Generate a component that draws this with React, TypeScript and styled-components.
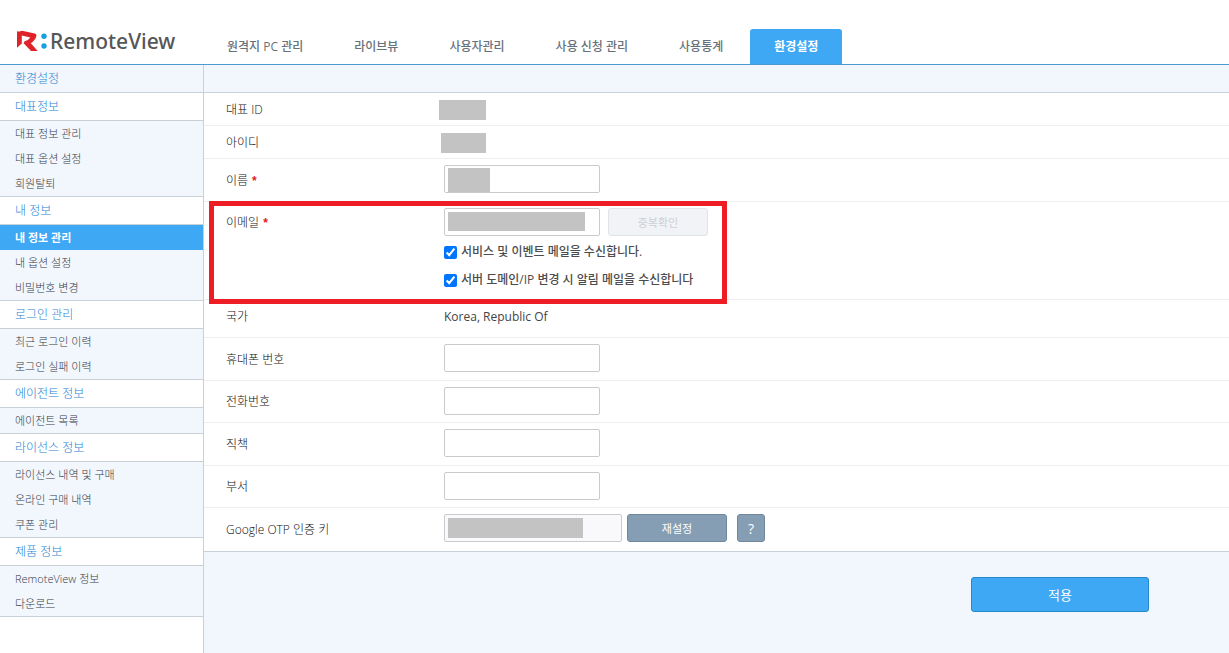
import React from "react";
import styled, { createGlobalStyle } from "styled-components";

const font = '"Open Sans", "Noto Sans CJK KR", sans-serif';
const line = "#c9d0d6";
const pale = "#f2f6fd";
const blue = "#3ea8f5";

const GlobalStyle = createGlobalStyle`
  *, *::before, *::after { box-sizing: border-box; }
  body { margin: 0; background: #fff; font-family: ${font}; font-size: 12px; color: #444; }
  button, input { font-family: inherit; font-size: inherit; }
`;

const Page = styled.div`
  min-height: 100vh;
  display: flex;
  flex-direction: column;
`;

const Header = styled.header`
  display: flex;
  align-items: flex-end;
  height: 65px;
  border-bottom: 1px solid #4b9bd1;
`;

const Brand = styled.a`
  display: flex;
  align-items: center;
  gap: 3px;
  width: 203px;
  height: 46px;
  padding-left: 16px;
  color: #555658;
  font-family: "Noto Sans", "Open Sans", sans-serif;
  font-size: 21px;
  font-weight: 500;
  text-decoration: none;
`;

const Nav = styled.nav`
  display: flex;
  gap: 3px;
`;

const Tab = styled.a<{ $active?: boolean }>`
  height: 35px;
  padding: 0 24px;
  line-height: 36px;
  border-radius: 3px 3px 0 0;
  white-space: nowrap;
  text-decoration: none;
  font-weight: ${(p) => (p.$active ? 700 : 500)};
  color: ${(p) => (p.$active ? "#fff" : "#67717b")};
  background: ${(p) => (p.$active ? blue : "transparent")};
`;

const Body = styled.div`
  flex: 1;
  display: flex;
`;

const Sidebar = styled.aside`
  flex: 0 0 204px;
  border-right: 1px solid ${line};
`;

const SideTitle = styled.h2<{ $shaded?: boolean }>`
  margin: 0;
  height: 28px;
  padding-left: 15px;
  line-height: 28px;
  border-bottom: 1px solid ${line};
  font-size: 12px;
  font-weight: 300;
  color: #1f83d2;
  background: ${(p) => (p.$shaded ? pale : "#fff")};
`;

const SideList = styled.ul`
  margin: 0;
  padding: 0;
  list-style: none;
  background: ${pale};
  border-bottom: 1px solid ${line};
`;

const SideLink = styled.a<{ $active?: boolean }>`
  display: block;
  height: 25px;
  padding-left: 15px;
  line-height: 26px;
  font-size: 11px;
  text-decoration: none;
  font-weight: ${(p) => (p.$active ? 700 : 300)};
  color: ${(p) => (p.$active ? "#fff" : "#333c46")};
  background: ${(p) => (p.$active ? blue : "transparent")};
`;

const Main = styled.main`
  flex: 1;
  min-width: 0;
  background: ${pale};
`;

const TitleBar = styled.div`
  height: 28px;
  border-bottom: 1px solid ${line};
`;

const FormTable = styled.table`
  width: 100%;
  border-collapse: separate;
  border-spacing: 0;
  background: #fff;
`;

const Row = styled.tr<{ $height: number }>`
  height: ${(p) => p.$height}px;
  & > * { border-bottom: 1px solid #eceef0; }
  &:last-child > * { border-bottom-color: ${line}; }
`;

const HeadCell = styled.th<{ $top?: boolean }>`
  position: relative;
  width: 240px;
  padding: ${(p) => (p.$top ? "12px 0 0 22px" : "1px 0 0 22px")};
  vertical-align: ${(p) => (p.$top ? "top" : "middle")};
  text-align: left;
  line-height: 18px;
  font-weight: 300;
  color: #111;
`;

const Cell = styled.td<{ $tall?: boolean }>`
  padding: ${(p) => (p.$tall ? "6px 0 0" : "0")};
  vertical-align: ${(p) => (p.$tall ? "top" : "middle")};
`;

const CountryText = styled.span`
  display: block;
  padding-bottom: 4px;
  line-height: 18px;
`;

const Required = styled.span`
  margin-left: 4px;
  color: #e01a22;
  font-family: "Liberation Sans", sans-serif;
  font-weight: 700;
`;

const Line = styled.div`
  display: flex;
  align-items: flex-start;
`;

const Field = styled.span`
  position: relative;
  display: block;
`;

const TextInput = styled.input<{ $wide?: boolean }>`
  display: block;
  width: ${(p) => (p.$wide ? 178 : 156)}px;
  height: 28px;
  padding: 0 6px;
  border: 1px solid #c8cacd;
  border-radius: 2px;
  background: ${(p) => (p.$wide ? "#f9f9fb" : "#fff")};
  color: #555;
`;

const Mask = styled.span<{ $x: number; $y: number; $w: number; $h: number }>`
  position: absolute;
  left: ${(p) => p.$x}px;
  top: ${(p) => p.$y}px;
  width: ${(p) => p.$w}px;
  height: ${(p) => p.$h}px;
  background: #c3c3c3;
`;

const MaskedValue = styled.span<{ $w: number; $pull: number }>`
  display: block;
  width: ${(p) => p.$w}px;
  height: 20px;
  margin: 2px 0 0 -${(p) => p.$pull}px;
  background: #c3c3c3;
`;

const Button = styled.button<{ $kind: "slate" | "primary" | "disabled"; $w: number }>`
  width: ${(p) => p.$w}px;
  height: ${(p) => (p.$kind === "primary" ? 35 : 28)}px;
  padding: 0;
  border-radius: 3px;
  border: 1px solid
    ${(p) => ({ slate: "#6f879c", primary: "#2489c9", disabled: "#e1e3e7" })[p.$kind]};
  background: ${(p) => ({ slate: "#869eb4", primary: blue, disabled: "#f2f3f6" })[p.$kind]};
  color: ${(p) => (p.$kind === "disabled" ? "#cdd0d5" : "#fff")};
  font-size: ${(p) => (p.$kind === "primary" ? 13 : 11)}px;
`;

const DuplicateButton = styled(Button)`
  margin-left: 8px;
`;

const ResetButton = styled(Button)`
  margin-left: 5px;
`;

const HelpButton = styled(Button)`
  margin-left: 10px;
  font-size: 14px;
`;

const CheckList = styled.div`
  padding-top: 1px;
`;

const CheckRow = styled.label`
  display: flex;
  align-items: center;
  gap: 4px;
  height: 28px;
  font-weight: 500;
  color: #4c4c4c;
`;

const Check = styled.input`
  width: 13px;
  height: 13px;
  margin: 3px 0 0;
  accent-color: #0075ff;
`;

const Highlight = styled.span`
  position: absolute;
  z-index: 1;
  left: 5px;
  top: -1px;
  width: 518px;
  height: 103px;
  border: 5px solid #ee1c24;
  pointer-events: none;
`;

const Footer = styled.div`
  display: flex;
  justify-content: flex-end;
  padding: 25px 80px;
`;

const groups: { title: string; items: string[] }[] = [
  { title: "대표정보", items: ["대표 정보 관리", "대표 옵션 설정", "회원탈퇴"] },
  { title: "내 정보", items: ["내 정보 관리", "내 옵션 설정", "비밀번호 변경"] },
  { title: "로그인 관리", items: ["최근 로그인 이력", "로그인 실패 이력"] },
  { title: "에이전트 정보", items: ["에이전트 목록"] },
  { title: "라이선스 정보", items: ["라이선스 내역 및 구매", "온라인 구매 내역", "쿠폰 관리"] },
  { title: "제품 정보", items: ["RemoteView 정보", "다운로드"] },
];

const tabs = ["원격지 PC 관리", "라이브뷰", "사용자관리", "사용 신청 관리", "사용통계", "환경설정"];

const plainFields = [
  { id: "mobile", label: "휴대폰 번호", height: 43 },
  { id: "phone", label: "전화번호", height: 42 },
  { id: "position", label: "직책", height: 43 },
  { id: "department", label: "부서", height: 42 },
];

const Logo = () => (
  <svg width="31" height="24" viewBox="0 0 31 24" aria-hidden="true">
    <path
      d="M1 2.2 Q3.500 3 6 1.800 L18.800 4.600 Q21 5.200 20.200 7.600 Q19.200 11.500 14.800 14.200 L21.700 22 L15 22 L7.600 14.300 L8.600 12.200 Q12.500 11.600 14.300 8.600 L5.800 6.600 L5.800 14.600 L1 18.800 Z"
      fill="#e0232b"
    />
    <circle cx="28" cy="7.300" r="2.700" fill="#16a0dc" />
    <circle cx="28" cy="17" r="2.700" fill="#16a0dc" />
  </svg>
);

export default function App() {
  return (
    <Page>
      <GlobalStyle />
      <Header>
        <Brand href="#">
          <Logo />
          RemoteView
        </Brand>
        <Nav>
          {tabs.map((t) => (
            <Tab key={t} href="#" $active={t === "환경설정"}>
              {t}
            </Tab>
          ))}
        </Nav>
      </Header>
      <Body>
        <Sidebar>
          <SideTitle $shaded>환경설정</SideTitle>
          {groups.map((g) => (
            <section key={g.title}>
              <SideTitle>{g.title}</SideTitle>
              <SideList>
                {g.items.map((item) => (
                  <li key={item}>
                    <SideLink href="#" $active={item === "내 정보 관리"}>
                      {item}
                    </SideLink>
                  </li>
                ))}
              </SideList>
            </section>
          ))}
        </Sidebar>
        <Main>
          <TitleBar />
          <FormTable>
            <tbody>
              <Row $height={33}>
                <HeadCell scope="row">대표 ID</HeadCell>
                <Cell>
                  <MaskedValue $w={47} $pull={5} />
                </Cell>
              </Row>
              <Row $height={33}>
                <HeadCell scope="row">아이디</HeadCell>
                <Cell>
                  <MaskedValue $w={45} $pull={3} />
                </Cell>
              </Row>
              <Row $height={43}>
                <HeadCell scope="row">
                  <label htmlFor="name">이름</label>
                  <Required>*</Required>
                </HeadCell>
                <Cell $tall>
                  <Field>
                    <TextInput id="name" />
                    <Mask $x={4} $y={3} $w={42} $h={24} />
                  </Field>
                </Cell>
              </Row>
              <Row $height={98}>
                <HeadCell scope="row" $top>
                  <label htmlFor="email">이메일</label>
                  <Required>*</Required>
                  <Highlight />
                </HeadCell>
                <Cell $tall>
                  <Line>
                    <Field>
                      <TextInput id="email" />
                      <Mask $x={4} $y={4} $w={137} $h={19} />
                    </Field>
                    <DuplicateButton type="button" disabled $kind="disabled" $w={100}>
                      중복확인
                    </DuplicateButton>
                  </Line>
                  <CheckList>
                    <CheckRow>
                      <Check type="checkbox" defaultChecked />
                      서비스 및 이벤트 메일을 수신합니다.
                    </CheckRow>
                    <CheckRow>
                      <Check type="checkbox" defaultChecked />
                      서버 도메인/IP 변경 시 알림 메일을 수신합니다
                    </CheckRow>
                  </CheckList>
                </Cell>
              </Row>
              <Row $height={38}>
                <HeadCell scope="row">
                  <CountryText>국가</CountryText>
                </HeadCell>
                <Cell>
                  <CountryText>Korea, Republic Of</CountryText>
                </Cell>
              </Row>
              {plainFields.map((f) => (
                <Row key={f.id} $height={f.height}>
                  <HeadCell scope="row">
                    <label htmlFor={f.id}>{f.label}</label>
                  </HeadCell>
                  <Cell $tall>
                    <TextInput id={f.id} />
                  </Cell>
                </Row>
              ))}
              <Row $height={44}>
                <HeadCell scope="row">
                  <label htmlFor="otp">Google OTP 인증 키</label>
                </HeadCell>
                <Cell $tall>
                  <Line>
                    <Field>
                      <TextInput id="otp" $wide readOnly />
                      <Mask $x={4} $y={4} $w={135} $h={20} />
                    </Field>
                    <ResetButton type="button" $kind="slate" $w={100}>
                      재설정
                    </ResetButton>
                    <HelpButton type="button" $kind="slate" $w={28}>
                      ?
                    </HelpButton>
                  </Line>
                </Cell>
              </Row>
            </tbody>
          </FormTable>
          <Footer>
            <Button type="submit" $kind="primary" $w={178}>
              적용
            </Button>
          </Footer>
        </Main>
      </Body>
    </Page>
  );
}
